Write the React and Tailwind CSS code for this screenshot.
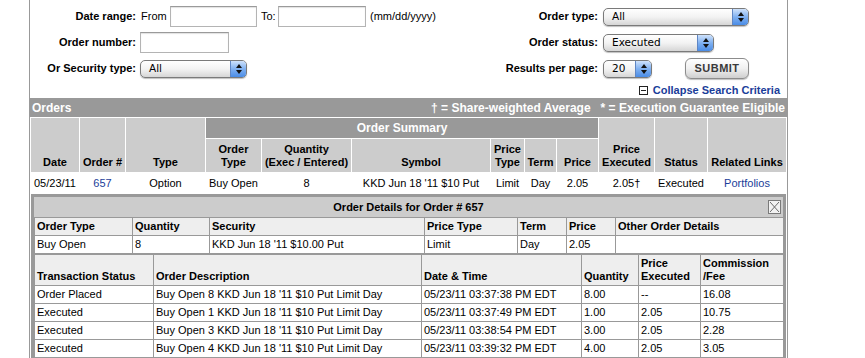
import React from "react";

function Select({ className, value }) {
  return (
    <div
      className={`flex h-[18px] items-center overflow-hidden rounded-[5px] border border-[#7a7a7a] bg-linear-to-b from-white via-[#f3f3f3] to-[#d6d6d6] shadow-[0_1px_1px_rgba(0,0,0,0.25)] ${className}`}
    >
      <span className="pl-[8px] font-['DejaVu_Sans',sans-serif] text-[10.5px] leading-none text-black">
        {value}
      </span>
      <div className="ml-auto flex h-full w-[16px] flex-col items-center justify-center gap-[2px] border-l border-[#5f86c4] bg-linear-to-b from-[#cfe2fb] via-[#7fb0f0] to-[#4a8ce6]">
        <svg width="6" height="4" viewBox="0 0 6 4">
          <path d="M3 0 L6 4 L0 4 Z" fill="#111" />
        </svg>
        <svg width="6" height="4" viewBox="0 0 6 4">
          <path d="M0 0 L6 0 L3 4 Z" fill="#111" />
        </svg>
      </div>
    </div>
  );
}

function TextInput({ className }) {
  return (
    <div
      className={`h-[21px] border border-[#b4b4b4] border-t-[#9a9a9a] bg-white shadow-[inset_0_1px_1px_rgba(0,0,0,0.12)] ${className}`}
    />
  );
}

const Label = ({ children }) => (
  <div className="text-right text-[11px] font-bold leading-none">{children}</div>
);

export default function App() {
  const txRows = [
    ["Order Placed", "Buy Open 8 KKD Jun 18 '11 $10 Put Limit Day", "05/23/11 03:37:38 PM EDT", "8.00", "--", "16.08"],
    ["Executed", "Buy Open 1 KKD Jun 18 '11 $10 Put Limit Day", "05/23/11 03:37:49 PM EDT", "1.00", "2.05", "10.75"],
    ["Executed", "Buy Open 3 KKD Jun 18 '11 $10 Put Limit Day", "05/23/11 03:38:54 PM EDT", "3.00", "2.05", "2.28"],
    ["Executed", "Buy Open 4 KKD Jun 18 '11 $10 Put Limit Day", "05/23/11 03:39:32 PM EDT", "4.00", "2.05", "3.05"],
  ];

  const hc = "bg-[#cccccc] text-[11px] font-bold leading-[13px] align-bottom text-center pb-[3px]";
  const dc = "text-[11px] leading-none text-center";
  const th2 = "border border-[#999] bg-[#eeeeee] text-left align-bottom px-[2px] pb-[2px] text-[11px] font-bold leading-[13px]";
  const td2 = "border border-[#999] bg-white text-left px-[2px] text-[11px] leading-none";

  return (
    <div className="h-[358px] w-[865px] overflow-hidden bg-white font-['Liberation_Sans',Arial,sans-serif] text-black">
      <div className="ml-[29px] min-h-[358px] w-[759px] border-x border-[#999]">
        {/* Search panel */}
        <div className="h-[98px] pt-[6px]">
          <div className="flex">
            {/* left block */}
            <div className="grid w-[440px] grid-cols-[106px_1fr] grid-rows-[21px_21px_21px] items-center gap-x-[4px] gap-y-[5px]">
              <Label>Date range:</Label>
              <div className="flex items-center text-[11px]">
                <span className="ml-[1px] w-[29px]">From</span>
                <TextInput className="w-[87px]" />
                <span className="ml-[4px] w-[17px]">To:</span>
                <TextInput className="w-[88px]" />
                <span className="ml-[4px]">(mm/dd/yyyy)</span>
              </div>
              <Label>Order number:</Label>
              <div>
                <TextInput className="w-[89px]" />
              </div>
              <Label>Or Security type:</Label>
              <div>
                <Select className="w-[107px]" value="All" />
              </div>
            </div>
            {/* right block */}
            <div className="grid grid-cols-[128px_1fr] grid-rows-[21px_21px_21px] items-center gap-x-[5px] gap-y-[5px]">
              <Label>Order type:</Label>
              <Select className="w-[146px]" value="All" />
              <Label>Order status:</Label>
              <Select className="w-[111px]" value="Executed" />
              <Label>Results per page:</Label>
              <div className="flex items-center">
                <Select className="w-[49px]" value="20" />
                <div className="ml-[33px] flex h-[21px] w-[64px] items-center justify-center rounded-[6px] border border-[#8c8c8c] bg-linear-to-b from-white via-[#f0f0f0] to-[#cfcfcf] text-[11px] font-bold tracking-[0.5px] text-[#3a3a3a] shadow-[0_1px_1px_rgba(0,0,0,0.25)]">
                  SUBMIT
                </div>
              </div>
            </div>
          </div>
          <div className="mt-[3px] flex items-center justify-end pr-[7px]">
            <svg width="9" height="9" viewBox="0 0 9 9" className="mr-[5px]">
              <rect x="0.5" y="0.5" width="8" height="8" fill="white" stroke="#222" />
              <path d="M2 4.5 H7" stroke="#222" />
            </svg>
            <span className="text-[11px] font-bold text-[#1a3d99]">Collapse Search Criteria</span>
          </div>
        </div>

        {/* Orders bar */}
        <div className="flex h-[19px] items-center justify-between bg-[#999999] px-[2px] text-[12px] font-bold text-white">
          <span>Orders</span>
          <span className="whitespace-pre">† = Share-weighted Average   * = Execution Guarantee Eligible</span>
        </div>

        {/* Orders table */}
        <table className="w-[757px] table-fixed border-separate border-spacing-[1px]">
          <colgroup>
            <col className="w-[48px]" />
            <col className="w-[45px]" />
            <col className="w-[79px]" />
            <col className="w-[55px]" />
            <col className="w-[89px]" />
            <col className="w-[138px]" />
            <col className="w-[33px]" />
            <col className="w-[31px]" />
            <col className="w-[41px]" />
            <col className="w-[55px]" />
            <col className="w-[52px]" />
            <col className="w-[78px]" />
          </colgroup>
          <thead>
            <tr className="h-[20px]">
              <th rowSpan={2} className={hc}>Date</th>
              <th rowSpan={2} className={hc}>Order #</th>
              <th rowSpan={2} className={hc}>Type</th>
              <th colSpan={6} className="bg-[#999999] text-center align-middle text-[12px] font-bold text-white">
                Order Summary
              </th>
              <th rowSpan={2} className={hc}>Price<br />Executed</th>
              <th rowSpan={2} className={hc}>Status</th>
              <th rowSpan={2} className={hc}>Related Links</th>
            </tr>
            <tr className="h-[33px]">
              <th className={hc}>Order<br />Type</th>
              <th className={hc}>Quantity<br />(Exec / Entered)</th>
              <th className={hc}>Symbol</th>
              <th className={hc}>Price<br />Type</th>
              <th className={hc}>Term</th>
              <th className={hc}>Price</th>
            </tr>
          </thead>
          <tbody>
            <tr className="h-[20px]">
              <td className={dc}>05/23/11</td>
              <td className={`${dc} text-[#1a3d99]`}>657</td>
              <td className={dc}>Option</td>
              <td className={dc}>Buy Open</td>
              <td className={dc}>8</td>
              <td className={dc}>KKD Jun 18 '11 $10 Put</td>
              <td className={dc}>Limit</td>
              <td className={dc}>Day</td>
              <td className={dc}>2.05</td>
              <td className={dc}>2.05†</td>
              <td className={dc}>Executed</td>
              <td className={`${dc} text-[#1a3d99]`}>Portfolios</td>
            </tr>
          </tbody>
        </table>

        {/* Order details */}
        <div className="mx-[1px] border-[3px] border-b-0 border-[#999]">
          <div className="relative flex h-[20px] items-center justify-center bg-[#cccccc] text-[11px] font-bold">
            Order Details for Order # 657
            <svg width="13" height="14" viewBox="0 0 13 14" className="absolute right-[2px] top-[3px]">
              <rect x="0.5" y="0.5" width="12" height="13" fill="#f2f2f2" stroke="#7a7a7a" />
              <path d="M2 2 L11 12 M11 2 L2 12" stroke="#6a6a6a" strokeWidth="1" />
            </svg>
          </div>
          <table className="w-full table-fixed border-collapse">
            <colgroup>
              <col className="w-[98px]" />
              <col className="w-[77px]" />
              <col className="w-[215px]" />
              <col className="w-[93px]" />
              <col className="w-[49px]" />
              <col className="w-[49px]" />
              <col className="w-[168px]" />
            </colgroup>
            <tbody>
              <tr className="h-[18px]">
                <th className={th2}>Order Type</th>
                <th className={th2}>Quantity</th>
                <th className={th2}>Security</th>
                <th className={th2}>Price Type</th>
                <th className={th2}>Term</th>
                <th className={th2}>Price</th>
                <th className={th2}>Other Order Details</th>
              </tr>
              <tr className="h-[18px]">
                <td className={td2}>Buy Open</td>
                <td className={td2}>8</td>
                <td className={td2}>KKD Jun 18 '11 $10.00 Put</td>
                <td className={td2}>Limit</td>
                <td className={td2}>Day</td>
                <td className={td2}>2.05</td>
                <td className={td2}></td>
              </tr>
            </tbody>
          </table>
          <table className="w-full table-fixed border-collapse">
            <colgroup>
              <col className="w-[119px]" />
              <col className="w-[268px]" />
              <col className="w-[160px]" />
              <col className="w-[57px]" />
              <col className="w-[62px]" />
              <col className="w-[83px]" />
            </colgroup>
            <tbody>
              <tr className="h-[31px]">
                <th className={th2}>Transaction Status</th>
                <th className={th2}>Order Description</th>
                <th className={th2}>Date &amp; Time</th>
                <th className={th2}>Quantity</th>
                <th className={th2}>Price<br />Executed</th>
                <th className={th2}>Commission<br />/Fee</th>
              </tr>
              {txRows.map((r, i) => (
                <tr key={i} className="h-[18px]">
                  {r.map((c, j) => (
                    <td key={j} className={td2}>{c}</td>
                  ))}
                </tr>
              ))}
            </tbody>
          </table>
        </div>
      </div>
    </div>
  );
}
